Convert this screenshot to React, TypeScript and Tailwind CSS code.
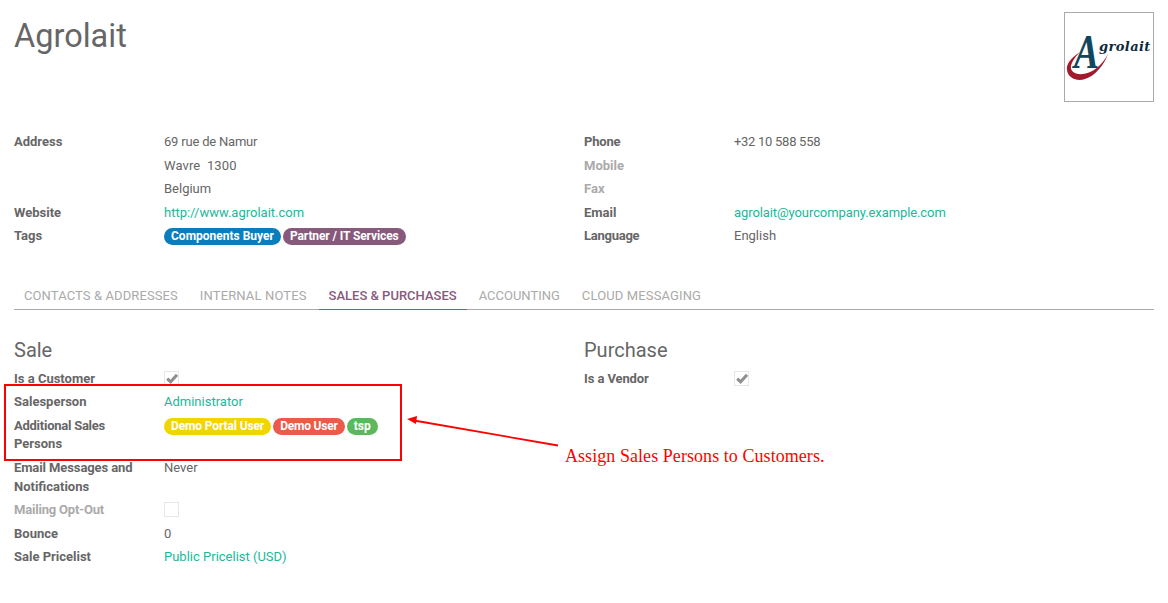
const labelCls = "w-[150px] shrink-0 font-bold text-[#666666]";

function Row({ label, children, muted }: { label: React.ReactNode; children?: React.ReactNode; muted?: boolean }) {
  return (
    <div className="flex pb-[5px] leading-[18.57px]">
      <div className={muted ? "w-[150px] shrink-0 font-bold text-[#aaaaaa]" : labelCls}>{label}</div>
      <div className="min-w-0 flex-1">{children}</div>
    </div>
  );
}

function Tag({ color, children }: { color: string; children: React.ReactNode }) {
  return (
    <span className={`inline-block h-[17px] rounded-[9px] px-[7px] text-[12px] leading-[17px] font-bold text-white ${color}`}>
      {children}
    </span>
  );
}

function Check({ checked }: { checked?: boolean }) {
  return (
    <div className="mt-px flex h-[15px] w-[15px] items-center justify-center border border-[#e6e6e6] bg-white">
      {checked && (
        <svg width="12" height="11" viewBox="0 0 12 11">
          <path d="M1.2 5.6 L4.6 8.8 L11 1.8" fill="none" stroke="#8f8f8f" strokeWidth="3" />
        </svg>
      )}
    </div>
  );
}

function Link({ children }: { children: React.ReactNode }) {
  return <span className="text-[#21b799]">{children}</span>;
}

function Logo() {
  return (
    <div className="h-[90px] w-[90px] shrink-0 border border-[#aaaaaa] bg-white">
      <svg width="88" height="88" viewBox="0 0 88 88">
        <path d="M15 39 C6 45 1 51 2 57 C3 65 12 69 20 66 C30 63 39 52 43 41 C37 52 28 60 18 61 C10 62 5 58 6 53 C7 48 11 43 15 39 Z" fill="#a3182c" />
        <text transform="translate(9 55) scale(0.85 1.1)" fontFamily="'Liberation Serif', serif" fontSize="44" fontWeight="700" fontStyle="italic" fill="#12465e">A</text>
        <text x="34" y="37.5" fontFamily="'DejaVu Serif', serif" fontSize="13" fontWeight="700" fontStyle="italic" letterSpacing="0.4" fill="#0e2a3a">grolait</text>
      </svg>
    </div>
  );
}

export default function App() {
  return (
    <div className="relative h-[603px] w-[1168px] overflow-hidden bg-white font-['Roboto',sans-serif] text-[13px] text-[#666666]">
      <div className="px-[14px] pt-[12px]">
        <div className="flex justify-between">
          <h1 className="pt-px text-[32.5px] leading-[46px] font-normal text-[#666666]">Agrolait</h1>
          <Logo />
        </div>

        <div className="mt-[31px] grid grid-cols-[570px_570px]">
          <div>
            <Row label="Address"><span className="tracking-[-0.2px]">69 rue de Namur</span></Row>
            <Row label=""><span className="tracking-[0.1px]">Wavre&nbsp;&nbsp;1300</span></Row>
            <Row label="">Belgium</Row>
            <Row label="Website"><Link>http://www.agrolait.com</Link></Row>
            <Row label="Tags">
              <div className="flex gap-[2px] pt-[1px]">
                <Tag color="bg-[#0a7ebd]">Components Buyer</Tag>
                <Tag color="bg-[#875a7b] tracking-[-0.1px]">Partner / IT Services</Tag>
              </div>
            </Row>
          </div>
          <div>
            <Row label={<span className="tracking-[-0.2px]">Phone</span>}><span className="tracking-[-0.28px]">+32 10 588 558</span></Row>
            <Row label="Mobile" muted />
            <Row label="Fax" muted />
            <Row label="Email"><span className="tracking-[-0.09px]"><Link>agrolait@yourcompany.example.com</Link></span></Row>
            <Row label={<span className="tracking-[-0.25px]">Language</span>}>English</Row>
          </div>
        </div>

        <div className="mt-[30px] flex border-b border-[#aaaaaa] text-[13px] leading-[18px]">
          <div className="px-[10px] pt-[6px] pb-[4px] tracking-[0.1px] text-[#aaaaaa]">CONTACTS &amp; ADDRESSES</div>
          <div className="ml-[2px] px-[10px] pt-[6px] pb-[4px] tracking-[0.14px] text-[#aaaaaa]">INTERNAL NOTES</div>
          <div className="relative ml-[2px] px-[10px] pt-[6px] pb-[4px] font-medium text-[#875a7b]">
            SALES &amp; PURCHASES
            <div className="absolute right-0 -bottom-px left-0 h-px bg-[#875a7b]" />
          </div>
          <div className="ml-[2px] px-[10px] pt-[6px] pb-[4px] text-[#aaaaaa]">ACCOUNTING</div>
          <div className="ml-[2px] px-[10px] pt-[6px] pb-[4px] tracking-[0.13px] text-[#aaaaaa]">CLOUD MESSAGING</div>
        </div>

        <div className="mt-[26px] grid grid-cols-[570px_570px]">
          <div>
            <h2 className="mb-[6px] text-[20px] leading-[28px] text-[#666666]">Sale</h2>
            <Row label="Is a Customer"><Check checked /></Row>
            <Row label="Salesperson"><Link>Administrator</Link></Row>
            <Row label={<div className="leading-[18px] pb-[1px]"><span className="tracking-[-0.25px]">Additional Sales</span><br />Persons</div>}>
              <div className="flex gap-[2px] pt-[1px]">
                <Tag color="bg-[#f0d500] tracking-[-0.125px]">Demo Portal User</Tag>
                <Tag color="bg-[#eb5a4b] tracking-[-0.2px]">Demo User</Tag>
                <Tag color="bg-[#5cb85c]">tsp</Tag>
              </div>
            </Row>
            <Row label={<><span className="tracking-[-0.1px]">Email Messages and</span><br />Notifications</>}>Never</Row>
            <Row label={<span className="tracking-[-0.2px]">Mailing Opt-Out</span>} muted><Check /></Row>
            <Row label="Bounce">0</Row>
            <Row label="Sale Pricelist"><Link>Public Pricelist (USD)</Link></Row>
            <h2 className="mt-[28px] text-[20px] leading-[28px] text-[#666666]">Misc</h2>
          </div>
          <div>
            <h2 className="mb-[6px] text-[20px] leading-[28px] text-[#666666]">Purchase</h2>
            <Row label={<span className="tracking-[-0.1px]">Is a Vendor</span>}><Check checked /></Row>
          </div>
        </div>
      </div>

      <div className="absolute top-[384px] left-[4px] h-[77px] w-[398px] border-2 border-[#ff0000]" />
      <svg className="absolute top-[410px] left-[400px]" width="170" height="50" viewBox="0 0 170 50">
        <path d="M158 35.5 L14 10.5" stroke="#ff0000" strokeWidth="1.8" fill="none" />
        <path d="M7 9 L17 6 L16 14 Z" fill="#ff0000" />
      </svg>
      <div className="absolute top-[445px] left-[565px] font-['Liberation_Serif',serif] text-[18px] leading-[22px] tracking-[0.06px] text-[#ff0000]">
        Assign Sales Persons to Customers.
      </div>
    </div>
  );
}
